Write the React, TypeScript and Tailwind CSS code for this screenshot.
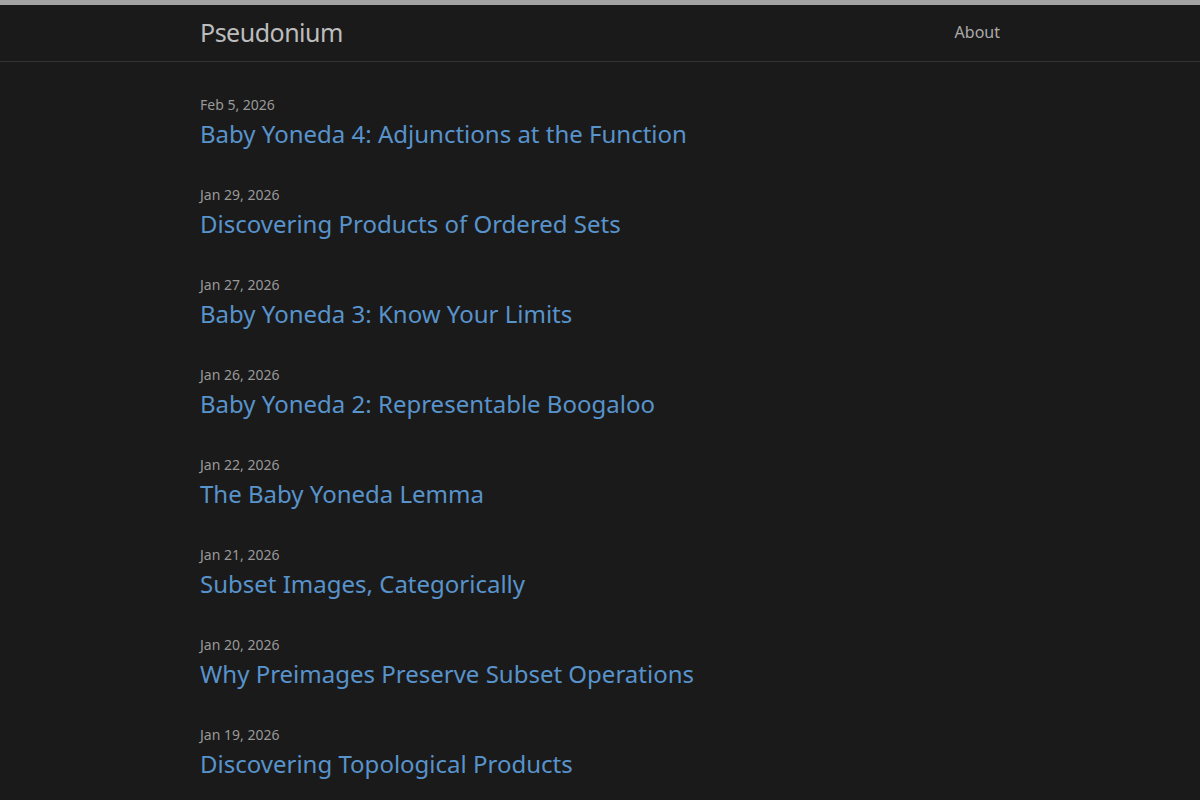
import React from 'react';

const posts = [
  { date: 'Feb 5, 2026', title: 'Baby Yoneda 4: Adjunctions at the Function' },
  { date: 'Jan 29, 2026', title: 'Discovering Products of Ordered Sets' },
  { date: 'Jan 27, 2026', title: 'Baby Yoneda 3: Know Your Limits' },
  { date: 'Jan 26, 2026', title: 'Baby Yoneda 2: Representable Boogaloo' },
  { date: 'Jan 22, 2026', title: 'The Baby Yoneda Lemma' },
  { date: 'Jan 21, 2026', title: 'Subset Images, Categorically' },
  { date: 'Jan 20, 2026', title: 'Why Preimages Preserve Subset Operations' },
  { date: 'Jan 19, 2026', title: 'Discovering Topological Products' },
];

export default function App() {
  return (
    <div className="min-h-screen bg-[#1a1a1a] font-['Noto_Sans',sans-serif]">
      <div className="h-[5px] bg-[#a3a3a3]" />
      <header className="border-b border-[#333333]">
        <div className="max-w-[800px] mx-auto h-[56px] flex items-center justify-between">
          <a className="text-[25px] text-[#bdbdbd] tracking-[-0.5px] leading-none pb-[1px]">Pseudonium</a>
          <a className="text-[16px] text-[#ababab] pb-[2px]">About</a>
        </div>
      </header>
      <main className="max-w-[800px] mx-auto pt-[33px]">
        <ul className="flex flex-col gap-[29px]">
          {posts.map((p, i) => (
            <li key={i}>
              <div className="text-[14px] text-[#999999] leading-[20px]">{p.date}</div>
              <a className="block text-[24px] text-[#5893cc] leading-[44px] -mt-[3px]">{p.title}</a>
            </li>
          ))}
        </ul>
      </main>
    </div>
  );
}
